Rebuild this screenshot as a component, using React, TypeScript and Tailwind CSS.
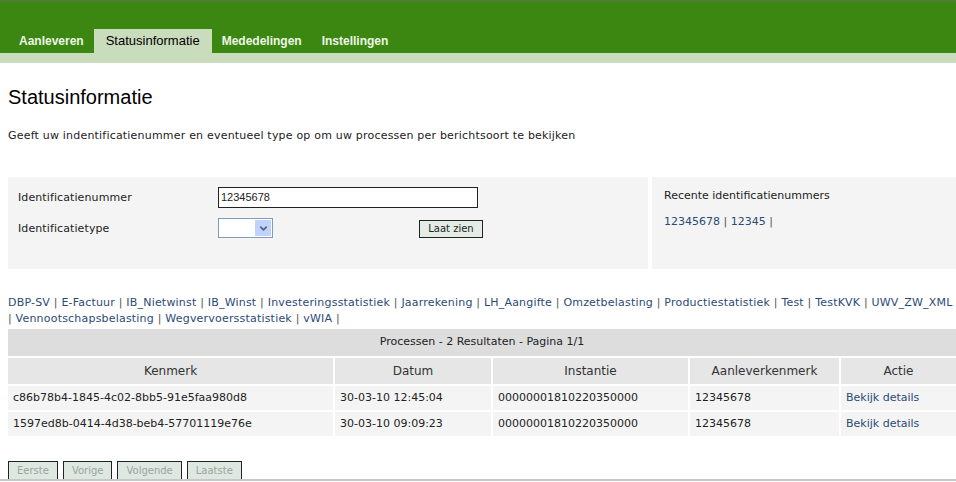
import { ChevronDown } from "lucide-react";

const tabs = ["Aanleveren", "Statusinformatie", "Mededelingen", "Instellingen"];

const berichtsoorten = [
  "DBP-SV",
  "E-Factuur",
  "IB_Nietwinst",
  "IB_Winst",
  "Investeringsstatistiek",
  "Jaarrekening",
  "LH_Aangifte",
  "Omzetbelasting",
  "Productiestatistiek",
  "Test",
  "TestKVK",
  "UWV_ZW_XML",
  "Vennootschapsbelasting",
  "Wegvervoersstatistiek",
  "vWIA",
];

const columns = ["Kenmerk", "Datum", "Instantie", "Aanleverkenmerk", "Actie"];

const processen = [
  {
    kenmerk: "c86b78b4-1845-4c02-8bb5-91e5faa980d8",
    datum: "30-03-10 12:45:04",
    instantie: "00000001810220350000",
    aanleverkenmerk: "12345678",
  },
  {
    kenmerk: "1597ed8b-0414-4d38-beb4-57701119e76e",
    datum: "30-03-10 09:09:23",
    instantie: "00000001810220350000",
    aanleverkenmerk: "12345678",
  },
];

const App = () => {
  return (
    <div className="w-[956px] h-[482px] overflow-hidden bg-white text-[11px] text-[#222] font-['DejaVu_Sans',Verdana,sans-serif]">
      {/* header */}
      <div className="bg-[#3b8712] border-t-2 border-[#4f7d33] h-[53px] flex items-end pl-[9px]">
        {tabs.map((t) =>
          t === "Statusinformatie" ? (
            <div
              key={t}
              className="h-[24px] px-[12px] flex items-center bg-[#c9dcbc] text-black text-[13px] font-['Liberation_Sans',Arial,sans-serif]"
            >
              {t}
            </div>
          ) : (
            <div
              key={t}
              className="h-[24px] px-[10px] flex items-center text-[#eef6e6] font-bold text-[12px] font-['Liberation_Sans',Arial,sans-serif]"
            >
              {t}
            </div>
          )
        )}
      </div>
      <div className="h-[10px] bg-[#c9dcbc]" />

      {/* title */}
      <h1 className="pl-[8px] pt-[22px] text-[20px] leading-[24px] text-black font-['Liberation_Sans',Arial,sans-serif]">
        Statusinformatie
      </h1>
      <p className="pl-[8px] pt-[20px] leading-[14px] tracking-[0.2px]">
        Geeft uw indentificatienummer en eventueel type op om uw processen per berichtsoort te bekijken
      </p>

      {/* form */}
      <div className="flex gap-[4px] pl-[8px] mt-[34px] h-[92px]">
        <div className="w-[640px] bg-[#f4f4f4] pl-[10px] pt-[10px]">
          <div className="flex items-center h-[21px]">
            <span className="w-[200px] pt-[2px] tracking-[0.1px]">Identificatienummer</span>
            <div className="w-[260px] h-[21px] border border-[#222] bg-white pl-[2px] flex items-center text-[11px] font-['Liberation_Sans',Arial,sans-serif]">
              12345678
            </div>
          </div>
          <div className="flex items-center h-[20px] mt-[10px]">
            <span className="w-[200px] pt-[2px] tracking-[0.1px]">Identificatietype</span>
            <div className="w-[55px] h-[20px] border border-[#7f9db9] bg-white flex justify-end p-[1px]">
              <div className="w-[16px] bg-[#c1d3fb] flex items-center justify-center">
                <ChevronDown className="size-[11px] text-[#4d6185]" strokeWidth={3.5} />
              </div>
            </div>
            <button className="ml-[146px] mt-[2px] w-[64px] h-[18px] border border-[#222] bg-[#e3ede6] text-[10px] leading-none">
              Laat zien
            </button>
          </div>
        </div>
        <div className="flex-1 bg-[#f4f4f4] pl-[12px] pt-[12px]">
          <div className="leading-[14px]">Recente identificatienummers</div>
          <div className="mt-[12px] leading-[14px] text-[#2b4a78]">
            12345678 <span className="text-[#555]">|</span> 12345 <span className="text-[#555]">|</span>
          </div>
        </div>
      </div>

      {/* berichtsoorten */}
      <div className="pl-[8px] pr-[2px] mt-[26px] leading-[16px] tracking-[0.2px] text-[#2b4a78]">
        {berichtsoorten.map((b) => (
          <span key={b}>
            {b} <span className="text-[#555]">|</span>{" "}
          </span>
        ))}
      </div>

      {/* table */}
      <div className="ml-[8px] mt-[2px] grid grid-cols-[325px_156px_195px_149px_115px] gap-[2px] w-[948px]">
        <div className="col-span-5 h-[27px] bg-[#dddddd] flex items-center justify-center">
          Processen - 2 Resultaten - Pagina 1/1
        </div>
        {columns.map((c) => (
          <div key={c} className="h-[26px] bg-[#e6e6e6] flex items-center justify-center text-[12px] text-[#333]">
            {c}
          </div>
        ))}
        {processen.map((p) => (
          <div key={p.kenmerk} className="contents">
            <div className="h-[24px] bg-[#f4f4f4] flex items-center pl-[5px]">{p.kenmerk}</div>
            <div className="h-[24px] bg-[#f4f4f4] flex items-center pl-[5px]">{p.datum}</div>
            <div className="h-[24px] bg-[#f4f4f4] flex items-center pl-[5px]">{p.instantie}</div>
            <div className="h-[24px] bg-[#f4f4f4] flex items-center pl-[5px]">{p.aanleverkenmerk}</div>
            <div className="h-[24px] bg-[#f4f4f4] flex items-center pl-[5px] text-[#2b4a78]">Bekijk details</div>
          </div>
        ))}
      </div>

      {/* pagination */}
      <div className="mt-[25px] border-b-2 border-[#c8c8c8] h-[20px] flex items-start gap-[5px] pl-[8px]">
        {["Eerste", "Vorige", "Volgende", "Laatste"].map((b) => (
          <button
            key={b}
            className="h-[18px] px-[8px] border border-b-0 border-[#222] bg-[#dde8e1] text-[#a2a2a2] text-[10px] leading-none"
          >
            {b}
          </button>
        ))}
      </div>
    </div>
  );
};

export default App;
